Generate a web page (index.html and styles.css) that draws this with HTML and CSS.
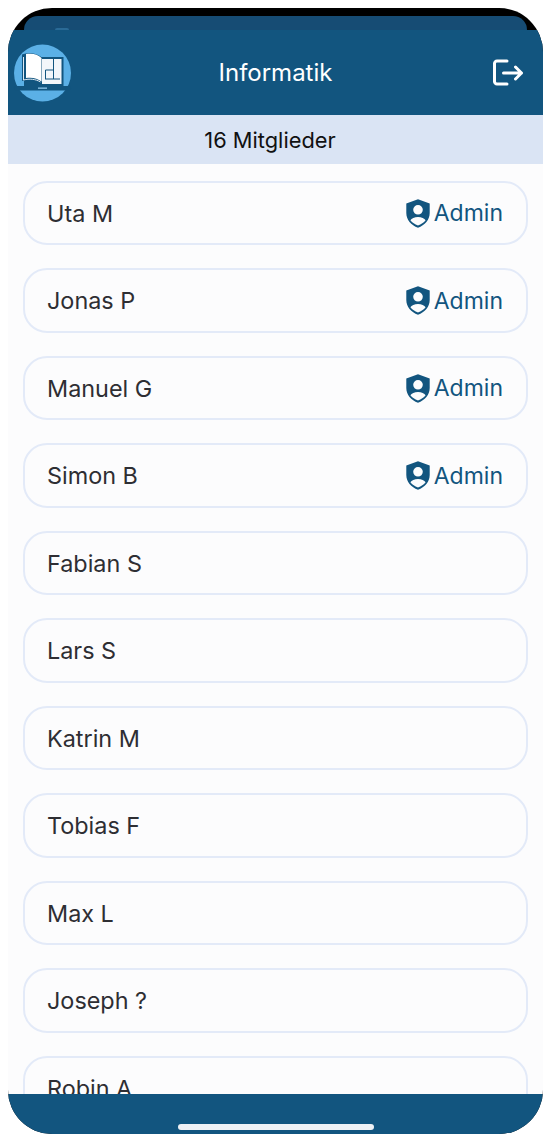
FILE: index.html
```html
<!DOCTYPE html>
<html lang="de">
<head>
<meta charset="utf-8">
<title>Informatik</title>
<link rel="stylesheet" href="styles.css">
</head>
<body>
<svg class="defs" width="0" height="0" aria-hidden="true">
  <symbol id="shield" viewBox="0 0 24 29">
    <path fill="#12557f" fill-rule="evenodd" d="M12 .3 23.700 4.400V14c0 6.900-4.800 12.200-11.700 14.700C5.100 26.200.3 20.900.3 14V4.400Zm0 5.700a4.800 4.800 0 1 0 0 9.600 4.800 4.800 0 0 0 0-9.600ZM4.400 21.300C6.300 23.700 8.800 25.400 12 26.500c3.200-1.100 5.700-2.800 7.600-5.200-1.200-2-4-3.300-7.600-3.300s-6.400 1.300-7.600 3.300Z"/>
  </symbol>
</svg>
<main class="phone">
  <div class="notch"><span class="notch-hump"></span></div>
  <header class="appbar">
    <svg class="logo" viewBox="0 0 58 58" role="img" aria-label="Logo">
      <circle cx="28.500" cy="29" r="28.500" fill="#5bb0e6"/>
      <path d="M10 13h39.500v29H10Z" fill="#12557f"/>
      <path d="M28 15h19.500v25H28Z" fill="#f2f6fa"/>
      <rect x="0" y="42" width="57" height="4.500" rx="2.200" fill="#12557f"/>
      <rect x="24" y="43.500" width="9" height="1.300" fill="#8fc7ea"/>
      <path d="M8 10.500c7-2.500 15-1.500 20 3v26c-5-4-13-4.500-20-2.500Z" fill="#12557f"/>
      <path d="M12 10c6-1 12 0 15.500 4v23.500c-4-3.500-10-4.500-15.500-3.500Z" fill="#fff"/>
      <path d="M9.500 13v23c6-1.500 12-1 17 2" fill="none" stroke="#dfeaf3" stroke-width="1"/>
      <path d="M31 35h15M31.500 35v-9h8M39.500 15v20" fill="none" stroke="#12557f" stroke-width="1"/>
    </svg>
    <h1 class="title">Informatik</h1>
    <svg class="logout" viewBox="0 0 32 30" fill="none" stroke="#fff" stroke-width="3" stroke-linecap="round" stroke-linejoin="round" role="img" aria-label="Abmelden">
      <path d="M15 3H5A2.500 2.500 0 0 0 2.500 5.500v18A2.500 2.500 0 0 0 5 26H15"/>
      <path d="M11.500 15H29.500M23.500 9l6 6-6 6"/>
    </svg>
  </header>
  <div class="count">16 Mitglieder</div>
  <ul class="members">
    <li class="member"><span>Uta M</span><span class="role"><svg class="shield"><use href="#shield"/></svg>Admin</span></li>
    <li class="member"><span>Jonas P</span><span class="role"><svg class="shield"><use href="#shield"/></svg>Admin</span></li>
    <li class="member"><span>Manuel G</span><span class="role"><svg class="shield"><use href="#shield"/></svg>Admin</span></li>
    <li class="member"><span>Simon B</span><span class="role"><svg class="shield"><use href="#shield"/></svg>Admin</span></li>
    <li class="member"><span>Fabian S</span></li>
    <li class="member"><span>Lars S</span></li>
    <li class="member"><span>Katrin M</span></li>
    <li class="member"><span>Tobias F</span></li>
    <li class="member"><span>Max L</span></li>
    <li class="member"><span>Joseph ?</span></li>
    <li class="member"><span>Robin A</span></li>
  </ul>
  <footer class="bottombar"><span class="home"></span></footer>
</main>
</body>
</html>
```
FILE: styles.css
```css
* { box-sizing: border-box; }
html, body { height: 100%; }
body {
  margin: 0;
  padding: 8px;
  background: #fff;
  font-family: Inter, "Noto Sans", sans-serif;
}
.defs { position: absolute; }
.phone {
  width: 535px;
  height: 1126px;
  border-radius: 44px;
  overflow: hidden;
  background: #000;
  display: flex;
  flex-direction: column;
}
.notch {
  height: 14px;
  margin-top: 8px;
  margin-left: 16px;
  margin-right: 16px;
  background: #164c74;
  border-radius: 15px 15px 0 0;
  position: relative;
  flex: none;
}
.notch-hump {
  position: absolute;
  left: 31px;
  bottom: 0;
  width: 14px;
  height: 2px;
  border-radius: 7px 7px 0 0;
  background: #2a6a96;
}
.appbar {
  height: 85px;
  flex: none;
  background: #12557f;
  display: flex;
  align-items: center;
  justify-content: space-between;
  padding: 0 19px 0 6px;
  position: relative;
}
.logo { width: 58px; height: 58px; }
.title {
  position: absolute;
  left: 0;
  right: 0;
  margin: 0;
  text-align: center;
  font-size: 24px;
  font-weight: 400;
  color: #fff;
}
.logout { width: 32px; height: 30px; }
.count {
  height: 49px;
  flex: none;
  background: #dae4f4;
  display: flex;
  align-items: center;
  justify-content: center;
  padding-right: 11px;
  font-size: 21.800px;
  color: #111;
}
.members {
  flex: 1;
  min-height: 0;
  overflow: hidden;
  margin: 0;
  padding: 16.500px 15px 0;
  list-style: none;
  background: #fcfcfd;
  display: flex;
  flex-direction: column;
  gap: 23px;
}
.member {
  flex: none;
  height: 64.500px;
  padding: 1px 23px 0 22px;
  border: 2px solid #e3eaf8;
  border-radius: 24px;
  display: flex;
  align-items: center;
  justify-content: space-between;
  font-size: 23.400px;
  color: #2e2e33;
}
.role {
  display: flex;
  align-items: center;
  gap: 4px;
  font-size: 23px;
  color: #12557f;
}
.shield { width: 24px; height: 29px; }
.bottombar {
  height: 40px;
  flex: none;
  background: #12557f;
  display: flex;
  align-items: flex-end;
  justify-content: center;
  padding-bottom: 4px;
}
.home {
  width: 196px;
  height: 6px;
  border-radius: 3px;
  background: #eef1f5;
}
```
